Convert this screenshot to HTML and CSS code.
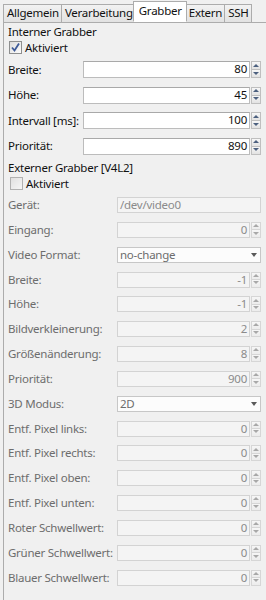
FILE: index.html
```html
<!DOCTYPE html>
<html>
<head>
<meta charset="utf-8">
<link rel="stylesheet" href="styles.css">
</head>
<body>
<div class="tabbar">
  <div class="tab">Allgemein</div>
  <div class="tab">Verarbeitung</div>
  <div class="tab active">Grabber</div>
  <div class="tab">Extern</div>
  <div class="tab">SSH</div>
</div>
<div class="panel">
  <section class="group g1">
    <div class="gtitle">Interner Grabber</div>
    <label class="check"><span class="box checked"><svg width="11" height="11" viewBox="0 0 11 11"><path d="M2 5.5 L4.5 8.5 L9 1.5" fill="none" stroke="#3d5a98" stroke-width="1.8"/></svg></span>Aktiviert</label>
    <div class="form f1">
      <span class="lbl">Breite:</span>
      <div class="spin"><span class="field">80</span><span class="btns"><span class="b up"></span><span class="b down"></span></span></div>
      <span class="lbl">Höhe:</span>
      <div class="spin"><span class="field">45</span><span class="btns"><span class="b up"></span><span class="b down"></span></span></div>
      <span class="lbl">Intervall [ms]:</span>
      <div class="spin"><span class="field">100</span><span class="btns"><span class="b up"></span><span class="b down"></span></span></div>
      <span class="lbl">Priorität:</span>
      <div class="spin"><span class="field">890</span><span class="btns"><span class="b up"></span><span class="b down"></span></span></div>
    </div>
  </section>
  <section class="group g2">
    <div class="gtitle">Externer Grabber [V4L2]</div>
    <label class="check"><span class="box"></span>Aktiviert</label>
    <div class="form f2 disabled">
      <span class="lbl">Gerät:</span>
      <span class="line">/dev/video0</span>
      <span class="lbl">Eingang:</span>
      <div class="spin"><span class="field">0</span><span class="btns"><span class="b up"></span><span class="b down"></span></span></div>
      <span class="lbl">Video Format:</span>
      <div class="combo"><span>no-change</span><span class="arrow"></span></div>
      <span class="lbl">Breite:</span>
      <div class="spin"><span class="field">-1</span><span class="btns"><span class="b up"></span><span class="b down"></span></span></div>
      <span class="lbl">Höhe:</span>
      <div class="spin"><span class="field">-1</span><span class="btns"><span class="b up"></span><span class="b down"></span></span></div>
      <span class="lbl">Bildverkleinerung:</span>
      <div class="spin"><span class="field">2</span><span class="btns"><span class="b up"></span><span class="b down"></span></span></div>
      <span class="lbl">Größenänderung:</span>
      <div class="spin"><span class="field">8</span><span class="btns"><span class="b up"></span><span class="b down"></span></span></div>
      <span class="lbl">Priorität:</span>
      <div class="spin"><span class="field">900</span><span class="btns"><span class="b up"></span><span class="b down"></span></span></div>
      <span class="lbl">3D Modus:</span>
      <div class="combo"><span>2D</span><span class="arrow"></span></div>
      <span class="lbl">Entf. Pixel links:</span>
      <div class="spin"><span class="field">0</span><span class="btns"><span class="b up"></span><span class="b down"></span></span></div>
      <span class="lbl">Entf. Pixel rechts:</span>
      <div class="spin"><span class="field">0</span><span class="btns"><span class="b up"></span><span class="b down"></span></span></div>
      <span class="lbl">Entf. Pixel oben:</span>
      <div class="spin"><span class="field">0</span><span class="btns"><span class="b up"></span><span class="b down"></span></span></div>
      <span class="lbl">Entf. Pixel unten:</span>
      <div class="spin"><span class="field">0</span><span class="btns"><span class="b up"></span><span class="b down"></span></span></div>
      <span class="lbl">Roter Schwellwert:</span>
      <div class="spin"><span class="field">0</span><span class="btns"><span class="b up"></span><span class="b down"></span></span></div>
      <span class="lbl">Grüner Schwellwert:</span>
      <div class="spin"><span class="field">0</span><span class="btns"><span class="b up"></span><span class="b down"></span></span></div>
      <span class="lbl">Blauer Schwellwert:</span>
      <div class="spin"><span class="field">0</span><span class="btns"><span class="b up"></span><span class="b down"></span></span></div>
    </div>
  </section>
</div>
</body>
</html>
```
FILE: styles.css
```css
* { box-sizing: border-box; }
html, body { margin: 0; padding: 0; }
body {
  width: 266px;
  height: 600px;
  overflow: hidden;
  background: #f0f0f0;
  font-family: "Noto Sans", "Open Sans", sans-serif;
  font-size: 11.5px;
  letter-spacing: -0.25px;
  color: #111;
}
.tabbar {
  display: flex;
  align-items: flex-end;
  height: 22px;
  padding-left: 3px;
}
.tab {
  height: 18px;
  line-height: 16px;
  padding: 0 2px 0 3px;
  border: 1px solid #acacac;
  border-bottom: none;
  margin-right: -1px;
  background: linear-gradient(#f2f2f2, #e2e2e2);
  white-space: nowrap;
}
.tab.active {
  height: 21px;
  line-height: 17px;
  background: #fff;
  margin: 0 -1px 0 -2px;
  padding: 0 4px 0 5px;
  position: relative;
  z-index: 1;
  border-bottom: 1px solid #fff;
}
.tab.active + .tab { margin-left: -1px; }
.panel {
  border-left: 1px solid #acacac;
  border-top: 1px solid #acacac;
  margin-left: 3px;
  height: 578px;
  padding: 0 5px 0 4px;
  background: #f0f0f0;
}
.gtitle {
  line-height: 15px;
  height: 15px;
  margin-top: 1px;
}
.g2 .gtitle { margin-top: 5.5px; }
.check {
  display: flex;
  align-items: center;
  height: 15px;
  margin-top: 1px;
  gap: 3px;
}
.g1 .check { padding-left: 1px; }
.g2 .check { padding-left: 2px; }
.box {
  width: 13px;
  height: 13px;
  border: 1px solid #8e8f8f;
  background: linear-gradient(135deg, #dcdcdc, #fcfcfc);
  display: flex;
  align-items: center;
  justify-content: center;
}
.g2 .box {
  border-color: #b1b1b1;
  background: linear-gradient(135deg, #e0e0e0, #f6f6f6);
}
.form {
  display: grid;
  align-items: center;
}
.f1 {
  grid-template-columns: 75px 178px;
  grid-auto-rows: 17px;
  row-gap: 8.5px;
  margin-top: 6px;
}
.f2 {
  grid-template-columns: 109px 144px;
  grid-auto-rows: 16px;
  row-gap: 8.85px;
  margin-top: 6px;
}
.lbl { white-space: nowrap; line-height: 16px; }
.disabled .lbl { color: #6d6d6d; }
.spin {
  display: flex;
  height: 100%;
}
.field {
  flex: 1;
  background: #fff;
  border: 1px solid #bcbcbc;
  border-top-color: #a9a9a9;
  text-align: right;
  padding-right: 2px;
  line-height: 14px;
}
.btns {
  width: 10px;
  display: flex;
  flex-direction: column;
  margin-left: 1px;
}
.b {
  flex: 1;
  border: 1px solid #bfbfbf;
  background: linear-gradient(#f7f7f7, #e2e2e2);
  position: relative;
}
.b + .b { border-top: none; }
.b::after {
  content: "";
  position: absolute;
  left: 50%;
  top: 50%;
  margin-left: -3px;
  margin-top: -2px;
  border-left: 3px solid transparent;
  border-right: 3px solid transparent;
}
.up::after { border-bottom: 3px solid #4c607f; }
.down::after { border-top: 3px solid #4c607f; }
.disabled .field {
  background: #f4f4f4;
  border-color: #d3d3d3;
  color: #8b8b8b;
}
.disabled .b {
  border-color: #d6d6d6;
  background: linear-gradient(#f6f6f6, #ececec);
}
.disabled .up::after { border-bottom-color: #a8a8a8; }
.disabled .down::after { border-top-color: #a8a8a8; }
.line {
  height: 100%;
  background: #f4f4f4;
  border: 1px solid #d3d3d3;
  color: #8b8b8b;
  padding-left: 2px;
  line-height: 14px;
}
.combo {
  height: 100%;
  background: #fcfcfc;
  border: 1px solid #c7c7c7;
  color: #6d6d6d;
  padding-left: 2px;
  line-height: 14px;
  display: flex;
  justify-content: space-between;
  align-items: center;
}
.arrow {
  width: 0;
  height: 0;
  border-left: 3.5px solid transparent;
  border-right: 3.5px solid transparent;
  border-top: 4px solid #5a5a5a;
  margin-right: 3px;
}
```
